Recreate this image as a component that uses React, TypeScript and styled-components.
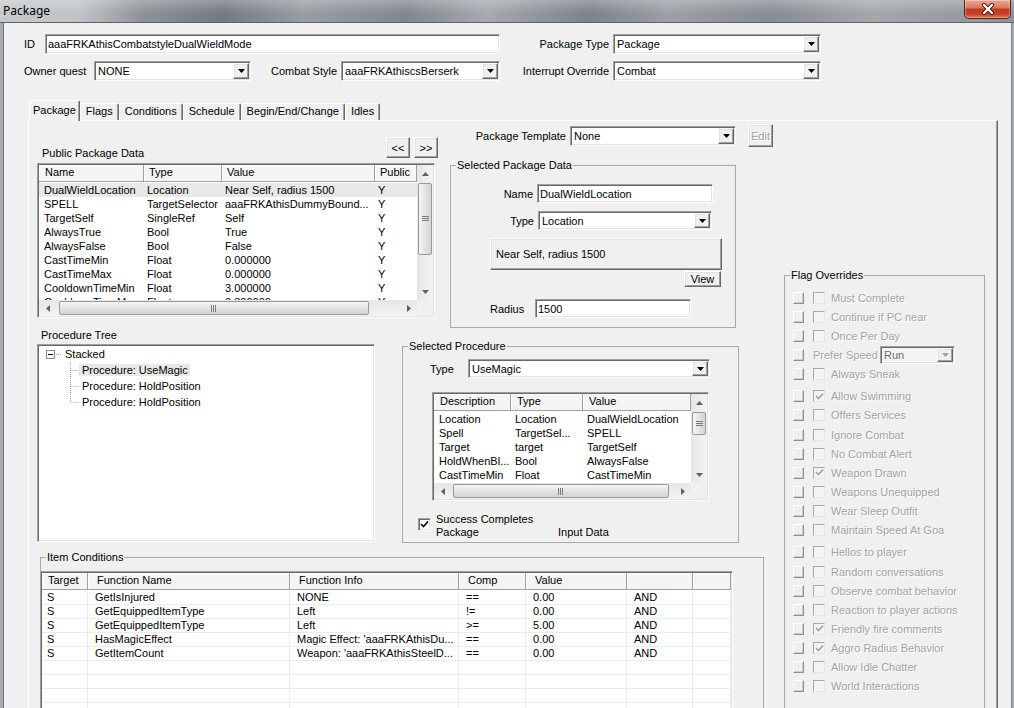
import React from 'react';
import styled, { createGlobalStyle, css } from 'styled-components';

const GlobalStyle = createGlobalStyle`
  html, body {
    margin: 0;
    padding: 0;
    background: #9a9fa4;
  }
  body {
    font-family: "Liberation Sans", Arial, sans-serif;
    font-size: 11px;
    color: #000;
    overflow: hidden;
  }
  #root {
    width: 1014px;
    height: 708px;
  }
  * {
    box-sizing: border-box;
  }
`;

// classic 3D edges
const sunken = css`
  border: 1px solid;
  border-color: #a0a0a0 #ffffff #ffffff #a0a0a0;
  box-shadow: inset 1px 1px 0 #696969, inset -1px -1px 0 #e3e3e3;
  padding: 1px;
`;

const raised = css`
  border: 1px solid;
  border-color: #ffffff #696969 #696969 #ffffff;
  box-shadow: inset -1px -1px 0 #a0a0a0, inset 1px 1px 0 #e3e3e3;
  background: #f0f0f0;
`;

const disabledText = css`
  color: #a3a3a3;
  text-shadow: 1px 1px 0 #ffffff;
`;

const Window = styled.div`
  width: 1014px;
  height: 708px;
  display: flex;
  flex-direction: column;
  overflow: hidden;
`;

const TitleBar = styled.div`
  height: 23px;
  flex: none;
  display: flex;
  align-items: flex-start;
  border-bottom: 1px solid #5d6369;
  background:
    linear-gradient(180deg, rgba(255, 255, 255, 0.25), rgba(255, 255, 255, 0) 60%),
    linear-gradient(90deg, #c6c9cc 0%, #bfc3c6 8%, #8d9399 14%, #727980 22%, #989ea4 30%,
      #80878e 40%, #a5aaaf 48%, #7b828a 58%, #9ca1a6 66%, #868c93 76%, #a4a8ad 86%, #8e949a 100%);
`;

const TitleText = styled.div`
  flex: 1;
  padding: 3px 0 0 3px;
  font-family: "Noto Sans", "Liberation Sans", sans-serif;
  font-size: 12px;
  line-height: 15px;
  color: #000;
`;

const CloseButton = styled.div`
  width: 47px;
  height: 19px;
  margin-right: 3px;
  flex: none;
  display: flex;
  align-items: center;
  justify-content: center;
  border: 1px solid #5a2016;
  border-top: none;
  border-radius: 0 0 5px 5px;
  background: linear-gradient(180deg, #e9a896 0%, #d97a62 42%, #c43a1c 52%, #c5432a 78%, #dc7a5e 100%);
  box-shadow: inset 0 0 0 1px rgba(255, 255, 255, 0.3);
`;

const FrameBody = styled.div`
  flex: 1;
  display: flex;
  min-height: 0;
`;

const FrameSide = styled.div<{ $w: number }>`
  width: ${p => p.$w}px;
  flex: none;
  background: #a6abb0;
  border-right: ${p => (p.$w > 3 ? '1px solid #6c7177' : 'none')};
  border-left: ${p => (p.$w > 3 ? 'none' : '1px solid #7d8288')};
`;

const Client = styled.div`
  flex: 1;
  display: flex;
  flex-direction: column;
  padding-left: 20px;
  background: #f0f0f0;
  overflow: hidden;
`;

const FormRow = styled.div<{ $mt: number }>`
  display: flex;
  align-items: center;
  height: 20px;
  margin-top: ${p => p.$mt}px;
  flex: none;
`;

const FieldLabel = styled.span<{ $w: number; $right?: boolean; $ml?: number }>`
  width: ${p => p.$w}px;
  margin-left: ${p => p.$ml ?? 0}px;
  flex: none;
  text-align: ${p => (p.$right ? 'right' : 'left')};
  padding-right: ${p => (p.$right ? 4 : 0)}px;
  white-space: nowrap;
`;

const TextBox = styled.div<{ $w: number; $h?: number }>`
  ${sunken};
  width: ${p => p.$w}px;
  height: ${p => p.$h ?? 20}px;
  flex: none;
  padding: 0 2px;
  display: flex;
  align-items: center;
  background: #fff;
  white-space: nowrap;
  overflow: hidden;
`;

const ComboFrame = styled.div<{ $w: number; $h: number; $disabled?: boolean }>`
  ${sunken};
  width: ${p => p.$w}px;
  height: ${p => p.$h}px;
  flex: none;
  display: flex;
  align-items: stretch;
  background: ${p => (p.$disabled ? '#f4f4f4' : '#fff')};
  color: ${p => (p.$disabled ? '#6d6d6d' : '#000')};
`;

const ComboValue = styled.span`
  flex: 1;
  padding-left: 2px;
  display: flex;
  align-items: center;
  white-space: nowrap;
  overflow: hidden;
`;

const ComboButton = styled.span`
  ${raised};
  width: 16px;
  flex: none;
  display: flex;
  align-items: center;
  justify-content: center;
`;

const TabStrip = styled.div`
  display: flex;
  align-items: flex-end;
  height: 21px;
  margin: 19px 0 -1px 5px;
  position: relative;
  z-index: 1;
  flex: none;
`;

const Tab = styled.div<{ $active?: boolean }>`
  height: ${p => (p.$active ? 21 : 17)}px;
  margin-bottom: ${p => (p.$active ? 0 : 1)}px;
  padding: 0 ${p => (p.$active ? 3 : 5)}px;
  line-height: ${p => (p.$active ? 18 : 15)}px;
  background: #f0f0f0;
  border-top: 1px solid #fff;
  border-left: 1px solid #fff;
  border-right: 1px solid #696969;
  box-shadow: inset -1px 0 0 #a0a0a0;
  border-radius: 2px 2px 0 0;
  white-space: nowrap;
`;

const TabPanel = styled.div`
  width: 970px;
  margin-left: 4px;
  flex: 1;
  min-height: 0;
  display: flex;
  align-items: flex-start;
  background: #f0f0f0;
  border-top: 1px solid #fff;
  border-left: 1px solid #fff;
  border-right: 1px solid #696969;
  box-shadow: inset -1px 0 0 #a0a0a0;
  overflow: hidden;
`;

const MainColumn = styled.div`
  width: 749px;
  flex: none;
  display: flex;
  flex-direction: column;
`;

const Section = styled.div<{ $h: number }>`
  height: ${p => p.$h}px;
  flex: none;
  display: flex;
  align-items: flex-start;
`;

const PublicBlock = styled.div`
  width: 401px;
  margin-left: 8px;
  flex: none;
`;

const PublicHeader = styled.div`
  height: 42px;
  display: flex;
  align-items: flex-end;
`;

const Caption = styled.span<{ $mb?: number }>`
  padding-left: 5px;
  line-height: 13px;
  margin-bottom: ${p => p.$mb ?? 0}px;
  white-space: nowrap;
`;

const PagerButtons = styled.div`
  margin-left: auto;
  margin-bottom: 5px;
  display: flex;
  gap: 4px;
`;

const PushButton = styled.div<{ $w: number; $h: number; $disabled?: boolean; $left?: boolean; $ml?: number }>`
  ${raised};
  width: ${p => p.$w}px;
  height: ${p => p.$h}px;
  margin-left: ${p => p.$ml ?? 0}px;
  flex: none;
  display: flex;
  align-items: center;
  justify-content: ${p => (p.$left ? 'flex-start' : 'center')};
  padding-left: ${p => (p.$left ? 5 : 0)}px;
  white-space: nowrap;
  ${p => p.$disabled && disabledText};
`;

const TemplateBlock = styled.div`
  width: 323px;
  margin-left: 12px;
  flex: none;
`;

const TemplateRow = styled.div`
  height: 23px;
  margin-top: 3px;
  display: flex;
  align-items: center;
`;

const GroupBox = styled.fieldset<{ $w: number; $h: number; $ml?: number; $mt?: number }>`
  width: ${p => p.$w}px;
  height: ${p => p.$h}px;
  margin: ${p => p.$mt ?? 0}px 0 0 ${p => p.$ml ?? 0}px;
  padding: 0;
  min-width: 0;
  flex: none;
  border: 1px solid #a9a9a9;
`;

const Legend = styled.legend`
  margin-left: 5px;
  padding: 0 1px;
  line-height: 13px;
  font-size: 11px;
`;

const BoxRow = styled.div<{ $mt: number; $ml?: number; $top?: boolean }>`
  display: flex;
  align-items: ${p => (p.$top ? 'flex-start' : 'center')};
  margin-top: ${p => p.$mt}px;
  margin-left: ${p => p.$ml ?? 0}px;
`;

const TreeBlock = styled.div`
  width: 338px;
  margin-left: 8px;
  flex: none;
`;

const TreeCaption = styled.div`
  margin-top: 1px;
  padding-left: 4px;
  line-height: 14px;
`;

const TreeFrame = styled.div`
  ${sunken};
  margin-top: 2px;
  height: 198px;
  background: #fff;
`;

const TreeRow = styled.div<{ $indent: number }>`
  height: 16px;
  display: flex;
  align-items: center;
  padding-left: ${p => p.$indent}px;
  white-space: nowrap;
`;

const TreeText = styled.span<{ $sel?: boolean }>`
  padding: 0 2px 0 3px;
  line-height: 12px;
  background: ${p => (p.$sel ? '#e8e8e8' : 'transparent')};
`;

const CheckBox = styled.span`
  ${sunken};
  padding: 0;
  width: 13px;
  height: 13px;
  flex: none;
  background: #fff;
  display: flex;
  align-items: center;
  justify-content: center;
  margin-top: 5px;
`;

const CheckText = styled.div`
  display: grid;
  grid-template-columns: 122px auto;
  line-height: 13px;
  margin-left: 5px;
`;

const ListFrame = styled.div<{ $w: number; $h: number; $v: boolean; $hs: boolean; $ml?: number }>`
  ${sunken};
  width: ${p => p.$w}px;
  height: ${p => p.$h}px;
  margin-left: ${p => p.$ml ?? 0}px;
  flex: none;
  background: #fff;
  display: grid;
  grid-template-columns: minmax(0, 1fr) ${p => (p.$v ? '16px' : '')};
  grid-template-rows: minmax(0, 1fr) ${p => (p.$hs ? '16px' : '')};
`;

const ListBody = styled.div`
  overflow: hidden;
  min-width: 0;
`;

const HeaderRow = styled.div`
  display: flex;
  height: 17px;
`;

const headerCell = css`
  height: 17px;
  line-height: 15px;
  background: #f4f4f4;
  border-right: 1px solid #a0a0a0;
  border-bottom: 1px solid #a0a0a0;
  box-shadow: inset 1px 1px 0 #fff;
  white-space: nowrap;
  overflow: hidden;
`;

const HeaderCell = styled.div<{ $w: number; $pad: number }>`
  ${headerCell};
  width: ${p => p.$w}px;
  flex: none;
  padding-left: ${p => p.$pad}px;
`;

const HeaderFill = styled.div`
  ${headerCell};
  flex: 1;
  border-right: none;
`;

const RowList = styled.div`
  padding-top: 1px;
`;

const ItemRow = styled.div<{ $sel?: boolean; $grid?: boolean }>`
  display: flex;
  height: 14px;
  line-height: ${p => (p.$grid ? 13 : 14)}px;
  background: ${p => (p.$sel ? '#e8e8e8' : 'transparent')};
  border-bottom: ${p => (p.$grid ? '1px solid #ececec' : 'none')};
`;

const ItemCell = styled.div<{ $w: number; $pad: number; $grid?: boolean }>`
  width: ${p => p.$w}px;
  flex: none;
  padding-left: ${p => p.$pad}px;
  white-space: nowrap;
  overflow: hidden;
  border-right: ${p => (p.$grid ? '1px solid #ececec' : 'none')};
`;

const ScrollTrackV = styled.div`
  display: flex;
  flex-direction: column;
  background: linear-gradient(90deg, #e6e6e6, #f3f3f3);
`;

const ScrollTrackH = styled.div`
  display: flex;
  background: linear-gradient(180deg, #e6e6e6, #f3f3f3);
  min-width: 0;
`;

const ScrollArrow = styled.div<{ $horizontal?: boolean }>`
  width: ${p => (p.$horizontal ? 17 : 16)}px;
  height: ${p => (p.$horizontal ? 16 : 17)}px;
  flex: none;
  display: flex;
  align-items: center;
  justify-content: center;
`;

const ThumbArea = styled.div<{ $horizontal?: boolean }>`
  flex: 1;
  display: flex;
  flex-direction: ${p => (p.$horizontal ? 'row' : 'column')};
  min-width: 0;
`;

const Thumb = styled.div<{ $off: number; $size: number; $horizontal?: boolean }>`
  flex: none;
  ${p =>
    p.$horizontal
      ? css`
          width: ${p.$size}px;
          margin: 1px 0 1px ${p.$off}px;
          background: linear-gradient(180deg, #f5f5f5, #e4e4e4 50%, #d4d4d4);
        `
      : css`
          height: ${p.$size}px;
          margin: ${p.$off}px 1px 0 1px;
          background: linear-gradient(90deg, #f5f5f5, #e4e4e4 50%, #d4d4d4);
        `};
  border: 1px solid #999;
  border-radius: 2px;
  display: flex;
  align-items: center;
  justify-content: center;
`;

const ScrollCorner = styled.div`
  background: #f0f0f0;
`;

const FlagList = styled.div`
  margin-top: 6px;
`;

const FlagRow = styled.div<{ $gap?: boolean }>`
  display: flex;
  align-items: center;
  height: 19.15px;
  margin-top: ${p => (p.$gap ? 3 : 0)}px;
  padding-left: 8px;
  white-space: nowrap;
`;

const OverrideBox = styled.span`
  width: 11px;
  height: 12px;
  flex: none;
  background: #f0f0f0;
  border: 1px solid;
  border-color: #fff #8f8f8f #8f8f8f #fff;
  box-shadow: inset -1px -1px 0 #cdcdcd;
`;

const FlagCheck = styled.span`
  width: 12px;
  height: 12px;
  margin-left: 9px;
  flex: none;
  background: #f4f4f4;
  border: 1px solid;
  border-color: #a8a8a8 #e6e6e6 #e6e6e6 #a8a8a8;
  display: flex;
  align-items: center;
  justify-content: center;
`;

const FlagLabel = styled.span<{ $ml: number; $w?: number }>`
  margin-left: ${p => p.$ml}px;
  width: ${p => (p.$w ? `${p.$w}px` : 'auto')};
  flex: none;
  ${disabledText};
`;

type Dir = 'up' | 'down' | 'left' | 'right';

const Arrow = ({ dir, color = '#000' }: { dir: Dir; color?: string }) => {
  const vertical = dir === 'up' || dir === 'down';
  const d = {
    down: 'M0 0h7L3.5 4z',
    up: 'M0 4h7L3.5 0z',
    left: 'M4 0v7L0 3.5z',
    right: 'M0 0v7L4 3.5z',
  }[dir];
  return (
    <svg width={vertical ? 7 : 4} height={vertical ? 4 : 7} viewBox={vertical ? '0 0 7 4' : '0 0 4 7'}>
      <path d={d} fill={color} />
    </svg>
  );
};

const CheckMark = ({ color }: { color: string }) => (
  <svg width="9" height="9" viewBox="0 0 9 9">
    <path d="M1 4l2.5 2.5L8 1.5" fill="none" stroke={color} strokeWidth="1.6" />
  </svg>
);

const ComboBox = ({ w, h = 20, value, disabled }: { w: number; h?: number; value: string; disabled?: boolean }) => (
  <ComboFrame $w={w} $h={h} $disabled={disabled}>
    <ComboValue>{value}</ComboValue>
    <ComboButton>
      <Arrow dir="down" color={disabled ? '#a0a0a0' : '#000'} />
    </ComboButton>
  </ComboFrame>
);

type Column = { title: string; w: number };
type Scroll = { off: number; size: number };

const VScrollBar = ({ off, size }: Scroll) => (
  <ScrollTrackV>
    <ScrollArrow>
      <Arrow dir="up" color="#5f5f5f" />
    </ScrollArrow>
    <ThumbArea>
      <Thumb $off={off} $size={size}>
        <svg width="7" height="6" viewBox="0 0 7 6">
          <path d="M0 0.5h7M0 2.5h7M0 4.5h7" stroke="#7a7a7a" strokeWidth="1" />
        </svg>
      </Thumb>
    </ThumbArea>
    <ScrollArrow>
      <Arrow dir="down" color="#5f5f5f" />
    </ScrollArrow>
  </ScrollTrackV>
);

const HScrollBar = ({ off, size }: Scroll) => (
  <ScrollTrackH>
    <ScrollArrow $horizontal>
      <Arrow dir="left" color="#5f5f5f" />
    </ScrollArrow>
    <ThumbArea $horizontal>
      <Thumb $off={off} $size={size} $horizontal>
        <svg width="6" height="7" viewBox="0 0 6 7">
          <path d="M0.5 0v7M2.5 0v7M4.5 0v7" stroke="#7a7a7a" strokeWidth="1" />
        </svg>
      </Thumb>
    </ThumbArea>
    <ScrollArrow $horizontal>
      <Arrow dir="right" color="#5f5f5f" />
    </ScrollArrow>
  </ScrollTrackH>
);

type ListProps = {
  w: number;
  h: number;
  ml?: number;
  cols: Column[];
  rows: string[][];
  pad: number;
  selected?: number;
  grid?: boolean;
  vs?: Scroll;
  hs?: Scroll;
};

const ListView = ({ w, h, ml, cols, rows, pad, selected, grid, vs, hs }: ListProps) => (
  <ListFrame $w={w} $h={h} $ml={ml} $v={!!vs} $hs={!!hs}>
    <ListBody>
      <HeaderRow>
        {cols.map((c, i) => (
          <HeaderCell key={i} $w={c.w} $pad={i === 0 ? 6 : pad + 2}>
            {c.title}
          </HeaderCell>
        ))}
        <HeaderFill />
      </HeaderRow>
      <RowList>
        {rows.map((r, ri) => (
          <ItemRow key={ri} $sel={ri === selected} $grid={grid}>
            {cols.map((c, ci) => (
              <ItemCell key={ci} $w={c.w} $pad={ci === 0 ? 5 : pad} $grid={grid}>
                {r[ci] ?? ''}
              </ItemCell>
            ))}
          </ItemRow>
        ))}
      </RowList>
    </ListBody>
    {vs && <VScrollBar {...vs} />}
    {hs && <HScrollBar {...hs} />}
    {vs && hs && <ScrollCorner />}
  </ListFrame>
);

const TreeConnector = ({ last }: { last?: boolean }) => (
  <svg width="17" height="16" viewBox="0 0 17 16">
    <path
      d={`M8.5 0V${last ? 8 : 16}M8.5 8.5H17`}
      stroke="#a0a0a0"
      strokeWidth="1"
      strokeDasharray="1 1"
      fill="none"
    />
  </svg>
);

const tabs = ['Package', 'Flags', 'Conditions', 'Schedule', 'Begin/End/Change', 'Idles'];

const publicCols: Column[] = [
  { title: 'Name', w: 105 },
  { title: 'Type', w: 78 },
  { title: 'Value', w: 153 },
  { title: 'Public', w: 42 },
];

const publicRows = [
  ['DualWieldLocation', 'Location', 'Near Self, radius 1500', 'Y'],
  ['SPELL', 'TargetSelector', 'aaaFRKAthisDummyBound...', 'Y'],
  ['TargetSelf', 'SingleRef', 'Self', 'Y'],
  ['AlwaysTrue', 'Bool', 'True', 'Y'],
  ['AlwaysFalse', 'Bool', 'False', 'Y'],
  ['CastTimeMin', 'Float', '0.000000', 'Y'],
  ['CastTimeMax', 'Float', '0.000000', 'Y'],
  ['CooldownTimeMin', 'Float', '3.000000', 'Y'],
  ['CooldownTimeMax', 'Float', '3.300000', 'Y'],
];

const procCols: Column[] = [
  { title: 'Description', w: 77 },
  { title: 'Type', w: 72 },
  { title: 'Value', w: 108 },
];

const procRows = [
  ['Location', 'Location', 'DualWieldLocation'],
  ['Spell', 'TargetSel...', 'SPELL'],
  ['Target', 'target', 'TargetSelf'],
  ['HoldWhenBl...', 'Bool', 'AlwaysFalse'],
  ['CastTimeMin', 'Float', 'CastTimeMin'],
  ['CastTimeMax', 'Float', 'CastTimeMax'],
];

const itemCols: Column[] = [
  { title: 'Target', w: 46 },
  { title: 'Function Name', w: 202 },
  { title: 'Function Info', w: 169 },
  { title: 'Comp', w: 67 },
  { title: 'Value', w: 101 },
  { title: '', w: 66 },
  { title: '', w: 38 },
];

const itemRows = [
  ['S', 'GetIsInjured', 'NONE', '==', '0.00', 'AND', ''],
  ['S', 'GetEquippedItemType', 'Left', '!=', '0.00', 'AND', ''],
  ['S', 'GetEquippedItemType', 'Left', '>=', '5.00', 'AND', ''],
  ['S', 'HasMagicEffect', "Magic Effect: 'aaaFRKAthisDu...", '==', '0.00', 'AND', ''],
  ['S', 'GetItemCount', "Weapon: 'aaaFRKAthisSteelD...", '==', '0.00', 'AND', ''],
  [],
  [],
  [],
  [],
  [],
];

type Flag = { label: string; checked?: boolean; gap?: boolean; combo?: string };

const flags: Flag[] = [
  { label: 'Must Complete' },
  { label: 'Continue if PC near' },
  { label: 'Once Per Day' },
  { label: 'Prefer Speed', combo: 'Run' },
  { label: 'Always Sneak' },
  { label: 'Allow Swimming', checked: true, gap: true },
  { label: 'Offers Services' },
  { label: 'Ignore Combat' },
  { label: 'No Combat Alert' },
  { label: 'Weapon Drawn', checked: true },
  { label: 'Weapons Unequipped' },
  { label: 'Wear Sleep Outfit' },
  { label: 'Maintain Speed At Goa' },
  { label: 'Hellos to player', gap: true },
  { label: 'Random conversations' },
  { label: 'Observe combat behavior' },
  { label: 'Reaction to player actions' },
  { label: 'Friendly fire comments', checked: true },
  { label: 'Aggro Radius Behavior', checked: true },
  { label: 'Allow Idle Chatter' },
  { label: 'World Interactions' },
];

export default function App() {
  return (
    <>
      <GlobalStyle />
      <Window>
        <TitleBar>
          <TitleText>Package</TitleText>
          <CloseButton>
            <svg width="14" height="12" viewBox="0 0 14 12">
              <path d="M3 2l8 8M11 2l-8 8" stroke="#4a1a12" strokeWidth="4" strokeLinecap="round" />
              <path d="M3 2l8 8M11 2l-8 8" stroke="#ffffff" strokeWidth="2.2" strokeLinecap="round" />
            </svg>
          </CloseButton>
        </TitleBar>
        <FrameBody>
          <FrameSide $w={4} />
          <Client>
            <FormRow $mt={11}>
              <FieldLabel $w={21}>ID</FieldLabel>
              <TextBox $w={455}>aaaFRKAthisCombatstyleDualWieldMode</TextBox>
              <FieldLabel $w={113} $right>
                Package Type
              </FieldLabel>
              <ComboBox w={208} value="Package" />
            </FormRow>
            <FormRow $mt={7}>
              <FieldLabel $w={70}>Owner quest</FieldLabel>
              <ComboBox w={157} value="NONE" />
              <FieldLabel $w={90} $right>
                Combat Style
              </FieldLabel>
              <ComboBox w={159} value="aaaFRKAthiscsBerserk" />
              <FieldLabel $w={113} $right>
                Interrupt Override
              </FieldLabel>
              <ComboBox w={208} value="Combat" />
            </FormRow>

            <TabStrip>
              {tabs.map((t, i) => (
                <Tab key={t} $active={i === 0}>
                  {t}
                </Tab>
              ))}
            </TabStrip>

            <TabPanel>
              <MainColumn>
                <Section $h={206}>
                  <PublicBlock>
                    <PublicHeader>
                      <Caption $mb={3}>Public Package Data</Caption>
                      <PagerButtons>
                        <PushButton $w={24} $h={21}>
                          &lt;&lt;
                        </PushButton>
                        <PushButton $w={24} $h={21}>
                          &gt;&gt;
                        </PushButton>
                      </PagerButtons>
                    </PublicHeader>
                    <ListView
                      w={398}
                      h={155}
                      cols={publicCols}
                      rows={publicRows}
                      pad={3}
                      selected={0}
                      vs={{ off: 1, size: 72 }}
                      hs={{ off: 3, size: 310 }}
                    />
                  </PublicBlock>

                  <TemplateBlock>
                    <TemplateRow>
                      <FieldLabel $w={120} $right>
                        Package Template
                      </FieldLabel>
                      <ComboBox w={166} value="None" />
                      <PushButton $w={25} $h={23} $ml={12} $disabled>
                        Edit
                      </PushButton>
                    </TemplateRow>
                    <GroupBox $w={286} $h={169} $mt={12}>
                      <Legend>Selected Package Data</Legend>
                      <BoxRow $mt={12}>
                        <FieldLabel $w={86} $right>
                          Name
                        </FieldLabel>
                        <TextBox $w={176} $h={19}>
                          DualWieldLocation
                        </TextBox>
                      </BoxRow>
                      <BoxRow $mt={8}>
                        <FieldLabel $w={87} $right>
                          Type
                        </FieldLabel>
                        <ComboBox w={174} h={19} value="Location" />
                      </BoxRow>
                      <BoxRow $mt={8} $ml={39}>
                        <PushButton $w={232} $h={32} $left>
                          Near Self, radius 1500
                        </PushButton>
                      </BoxRow>
                      <BoxRow $mt={1} $ml={233}>
                        <PushButton $w={37} $h={16}>
                          View
                        </PushButton>
                      </BoxRow>
                      <BoxRow $mt={12} $ml={39}>
                        <FieldLabel $w={45}>Radius</FieldLabel>
                        <TextBox $w={156} $h={19}>
                          1500
                        </TextBox>
                      </BoxRow>
                    </GroupBox>
                  </TemplateBlock>
                </Section>

                <Section $h={216}>
                  <TreeBlock>
                    <TreeCaption>Procedure Tree</TreeCaption>
                    <TreeFrame>
                      <TreeRow $indent={7}>
                        <svg width="16" height="9" viewBox="0 0 16 9">
                          <rect x="0.5" y="0.5" width="8" height="8" fill="#fff" stroke="#8c8c8c" />
                          <path d="M2 4.5h5" stroke="#000" />
                          <path d="M10 4.5h6" stroke="#a0a0a0" strokeDasharray="1 1" />
                        </svg>
                        <TreeText>Stacked</TreeText>
                      </TreeRow>
                      <TreeRow $indent={23}>
                        <TreeConnector />
                        <TreeText $sel>Procedure: UseMagic</TreeText>
                      </TreeRow>
                      <TreeRow $indent={23}>
                        <TreeConnector />
                        <TreeText>Procedure: HoldPosition</TreeText>
                      </TreeRow>
                      <TreeRow $indent={23}>
                        <TreeConnector last />
                        <TreeText>Procedure: HoldPosition</TreeText>
                      </TreeRow>
                    </TreeFrame>
                  </TreeBlock>

                  <GroupBox $w={337} $h={203} $ml={27} $mt={13}>
                    <Legend>Selected Procedure</Legend>
                    <BoxRow $mt={6} $ml={27}>
                      <FieldLabel $w={38}>Type</FieldLabel>
                      <ComboBox w={242} h={19} value="UseMagic" />
                    </BoxRow>
                    <BoxRow $mt={14} $ml={29}>
                      <ListView
                        w={277}
                        h={109}
                        cols={procCols}
                        rows={procRows}
                        pad={4}
                        vs={{ off: 1, size: 23 }}
                        hs={{ off: 2, size: 216 }}
                      />
                    </BoxRow>
                    <BoxRow $mt={12} $ml={15} $top>
                      <CheckBox>
                        <CheckMark color="#000" />
                      </CheckBox>
                      <CheckText>
                        <span>Success Completes</span>
                        <span />
                        <span>Package</span>
                        <span>Input Data</span>
                      </CheckText>
                    </BoxRow>
                  </GroupBox>
                </Section>

                <GroupBox $w={724} $h={170} $ml={11} $mt={8}>
                  <Legend>Item Conditions</Legend>
                  <BoxRow $mt={7}>
                    <ListView w={693} h={150} ml={-1} cols={itemCols} rows={itemRows} pad={7} grid />
                  </BoxRow>
                </GroupBox>
              </MainColumn>

              <GroupBox $w={201} $h={460} $ml={6} $mt={148}>
                <Legend>Flag Overrides</Legend>
                <FlagList>
                  {flags.map(f => (
                    <FlagRow key={f.label} $gap={f.gap}>
                      <OverrideBox />
                      {f.combo ? (
                        <>
                          <FlagLabel $ml={9} $w={67}>
                            {f.label}
                          </FlagLabel>
                          <ComboBox w={75} h={18} value={f.combo} disabled />
                        </>
                      ) : (
                        <>
                          <FlagCheck>{f.checked && <CheckMark color="#a0a0a0" />}</FlagCheck>
                          <FlagLabel $ml={6}>{f.label}</FlagLabel>
                        </>
                      )}
                    </FlagRow>
                  ))}
                </FlagList>
              </GroupBox>
            </TabPanel>
          </Client>
          <FrameSide $w={3} />
        </FrameBody>
      </Window>
    </>
  );
}
